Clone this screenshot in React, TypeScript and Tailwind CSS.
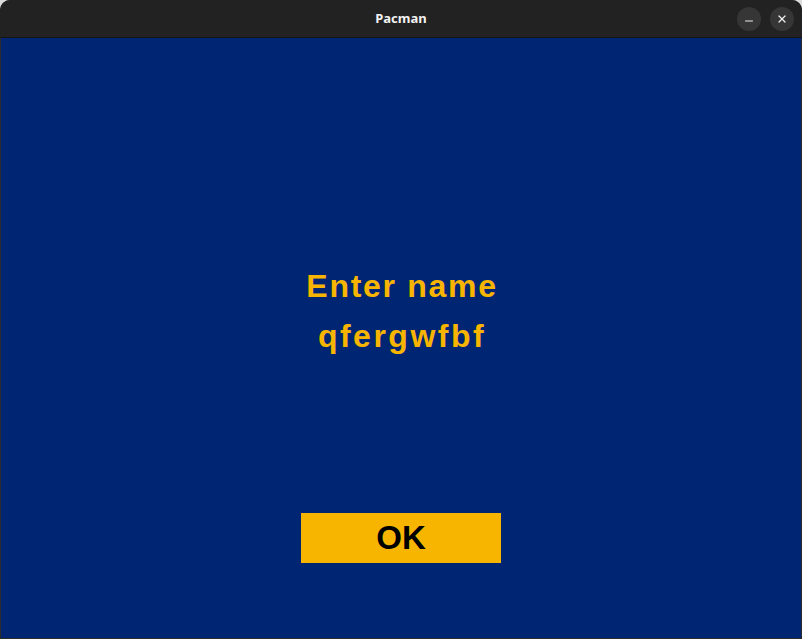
import { Minus, X } from "lucide-react";

export default function App() {
  return (
    <div className="w-[802px] h-[639px] bg-[#dcdcdc] overflow-hidden">
      <div className="w-full h-full flex flex-col rounded-t-[10px] overflow-hidden bg-[#2b2b2b]">
        {/* title bar */}
        <div className="relative h-[38px] shrink-0 bg-[#222222] border-b border-[#161616] flex items-center justify-center">
          <span className="font-['Noto_Sans',sans-serif] font-bold text-[13px] text-[#f2f2f2]">
            Pacman
          </span>
          <div className="absolute right-[8px] top-[7px] flex gap-[9px]">
            <button className="size-[24px] rounded-full bg-[#363636] flex items-center justify-center text-[#eeeeee]">
              <Minus className="size-[12px] translate-y-[2px]" strokeWidth={2} />
            </button>
            <button className="size-[24px] rounded-full bg-[#363636] flex items-center justify-center text-[#eeeeee]">
              <X className="size-[12px]" strokeWidth={2.5} />
            </button>
          </div>
        </div>
        {/* game surface */}
        <div className="flex-1 mx-px mb-px bg-[#002673] flex flex-col items-center font-['Liberation_Sans',Arial,sans-serif] font-bold">
          <div className="mt-[232px] h-[50px] leading-[32px] text-[32px] tracking-[1.7px] pl-[2px] text-[#f8b500]">
            Enter name
          </div>
          <div className="h-[32px] leading-[32px] text-[32px] tracking-[2.5px] pl-[2px] text-[#f8b500]">
            qfergwfbf
          </div>
          <button className="mt-[161px] w-[200px] h-[50px] bg-[#f8b500] text-black text-[33px] leading-[50px]">
            OK
          </button>
        </div>
      </div>
    </div>
  );
}
